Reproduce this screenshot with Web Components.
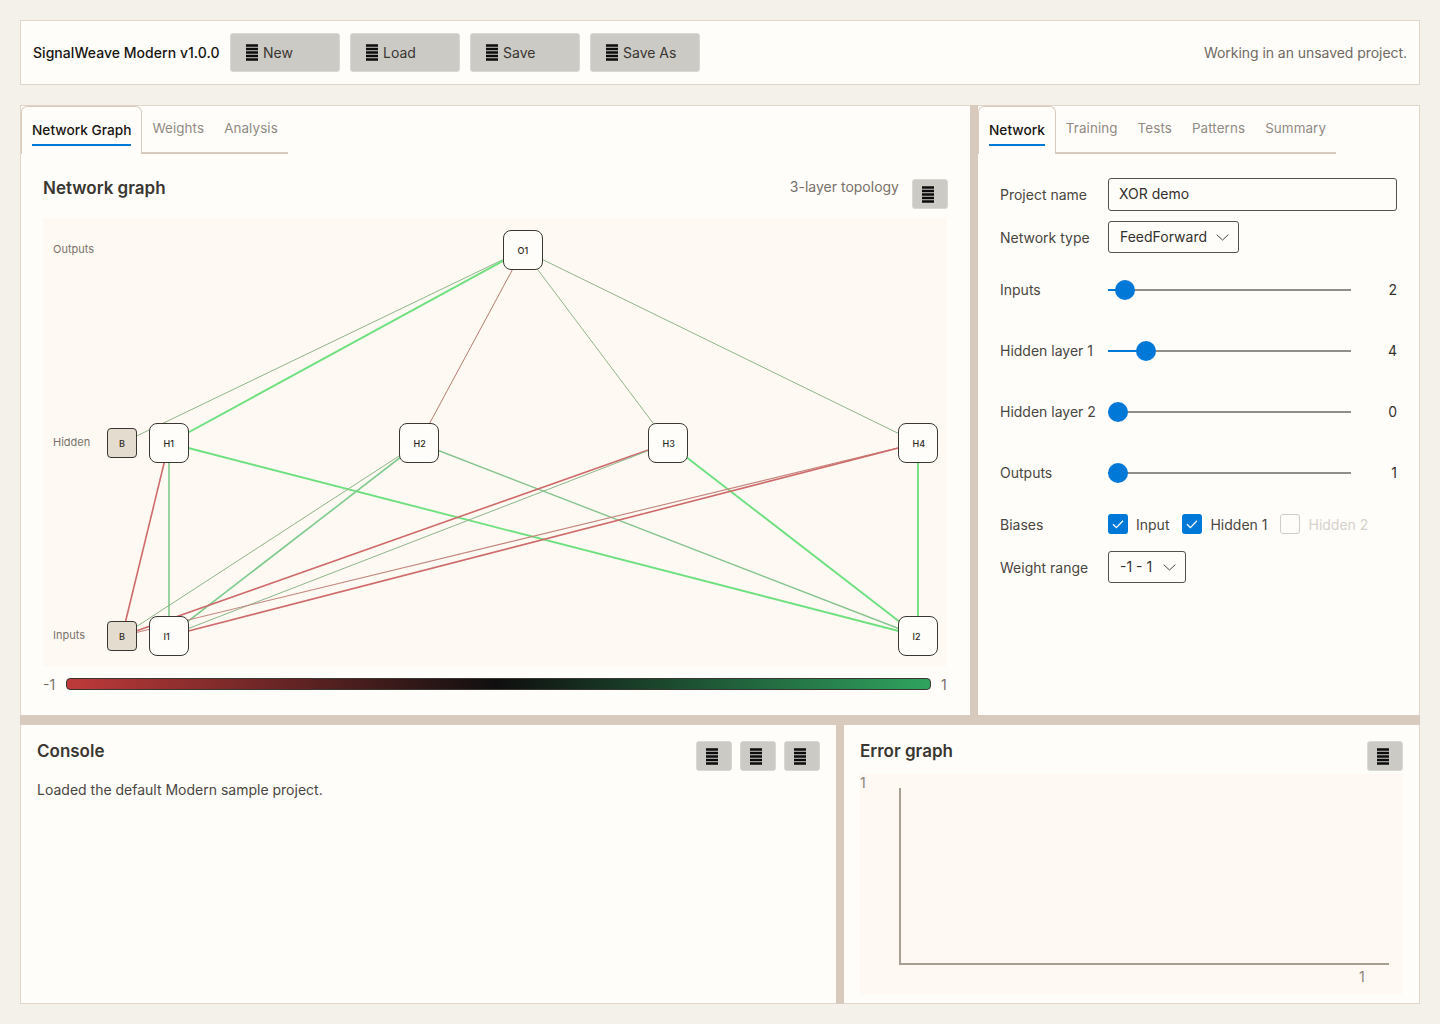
<!DOCTYPE html>
<html lang="en">
<head>
<meta charset="utf-8">
<title>SignalWeave Modern</title>
<style>
  html, body { margin: 0; height: 100%; }
  body {
    background: #f4f0ea;
    padding: 20px;
    box-sizing: border-box;
    height: 1024px;
    font-family: Inter, "Liberation Sans", sans-serif;
    font-size: 14px;
    color: #3a3631;
  }
  sw-header { margin-bottom: 20px; }
</style>
</head>
<body>
<sw-header title="SignalWeave Modern v1.0.0" status="Working in an unsaved project."></sw-header>
<sw-workspace>
  <sw-network-panel slot="graph"></sw-network-panel>
  <sw-settings-panel slot="settings"></sw-settings-panel>
  <sw-console slot="console"></sw-console>
  <sw-error-graph slot="error"></sw-error-graph>
</sw-workspace>

<script>
class Base extends HTMLElement {
  constructor() {
    super();
    this.attachShadow({ mode: 'open' });
  }

  connectedCallback() {
    this.shadowRoot.innerHTML = `<style>${this.styles()}</style>${this.markup()}`;
  }

  attr(name, fallback = '') {
    return this.getAttribute(name) ?? fallback;
  }
}

class Icon extends Base {
  styles() {
    return `:host { display: block; width: 12px; height: 17px; line-height: 0; }`;
  }
  markup() {
    // five stacked bars, same glyph on every button
    return `<svg width="12" height="17" viewBox="0 0 12 17">
      <path fill="#0c0c0c" d="M0 .2h12v2.6H0zM0 3.7h12v2.6H0zM0 7.2h12v2.6H0zM0 10.7h12v2.6H0zM0 14.2h12v2.6H0z"/>
    </svg>`;
  }
}

class Button extends Base {
  styles() {
    return `
    :host { display: block; }
    button {
      appearance: none;
      display: flex;
      align-items: center;
      gap: 5px;
      box-sizing: border-box;
      width: 110px;
      height: 39px;
      padding: 0 0 0 15px;
      background: #cbcac5;
      border: 1px solid #dad8d2;
      border-radius: 3px;
      font: inherit;
      color: #3a3631;
    }
    :host([icon-only]) button {
      width: 36px;
      height: 30px;
      padding: 0 0 0 9px;
    }`;
  }
  markup() {
    return `<button><sw-icon></sw-icon>${this.attr('label')}</button>`;
  }
}

class Header extends Base {
  styles() {
    return `
    :host {
      display: flex;
      align-items: center;
      box-sizing: border-box;
      height: 65px;
      padding: 0 12px;
      background: #fffdf9;
      border: 1px solid #dfd5c9;
    }
    h1 { width: 197px; margin: 0; font-size: 14px; font-weight: 500; letter-spacing: .04px; color: #171512; white-space: nowrap; }
    .actions { display: flex; gap: 10px; }
    .status { margin-left: auto; letter-spacing: -.05px; color: #6f6a63; }`;
  }
  markup() {
    const actions = ['New', 'Load', 'Save', 'Save As']
      .map(label => `<sw-button label="${label}"></sw-button>`).join('');
    return `<h1>${this.attr('title')}</h1>
      <div class="actions">${actions}</div>
      <div class="status">${this.attr('status')}</div>`;
  }
}

class Workspace extends Base {
  styles() {
    return `
    :host {
      display: grid;
      grid-template-columns: 816px 8px 126px 8px 442px;
      grid-template-rows: 610px 10px 279px;
      background: #d8cbbd;
    }
    .graph { grid-column: 1 / 4; grid-row: 1; display: grid; }
    .settings { grid-column: 5; grid-row: 1; display: grid; }
    .console { grid-column: 1; grid-row: 3; display: grid; }
    .error { grid-column: 3 / 6; grid-row: 3; display: grid; }`;
  }
  markup() {
    return `
      <div class="graph"><slot name="graph"></slot></div>
      <div class="settings"><slot name="settings"></slot></div>
      <div class="console"><slot name="console"></slot></div>
      <div class="error"><slot name="error"></slot></div>`;
  }
}

class Tabs extends Base {
  styles() {
    return `
    :host { display: flex; align-items: flex-start; height: 48px; font-size: 13.7px; white-space: nowrap; }
    .tab { padding: 0 10px; margin-top: 14px; color: #8f8a83; font-size: 13.4px; letter-spacing: .1px; line-height: 16px; }
    .rest { display: flex; height: 48px; box-sizing: border-box; border-bottom: 2px solid #d8cbbd; }
    .active {
      box-sizing: border-box;
      height: 48px;
      padding: 15px 10px 0;
      background: #fffdf9;
      border: 1px solid #d8cbbd;
      border-bottom: 0;
      border-radius: 6px 6px 0 0;
      color: #171512;
      font-weight: 500;
    }
    .active span { display: block; line-height: 17px; padding-bottom: 5px; border-bottom: 2px solid #0078d7; }`;
  }
  markup() {
    const [first, ...rest] = this.attr('items').split(',');
    return `<div class="active"><span>${first}</span></div>
      <div class="rest">${rest.map(t => `<div class="tab">${t}</div>`).join('')}</div>`;
  }
}

class Graph extends Base {
  styles() {
    return `
    :host { display: block; position: relative; width: 904px; height: 448px; background: #fff9f3; }
    svg { position: absolute; inset: 0; }
    .node, .bias {
      position: absolute;
      box-sizing: border-box;
      display: flex;
      align-items: center;
      border: 1px solid #3a3631;
      font-size: 9px;
      font-weight: 500;
      color: #2d2a26;
    }
    .node { width: 40px; height: 40px; margin: -20px; padding-left: 13.5px; border-radius: 8px; background: #fffdf9; }
    .bias { width: 30px; height: 30px; margin: -15px; justify-content: center; border-radius: 4px; background: #e3dccf; }
    .row { position: absolute; left: 10px; font-size: 11px; color: #7a736b; line-height: 14px; }`;
  }
  markup() {
    const pos = {
      O1: [480, 32], H1: [126, 225], H2: [376, 225], H3: [625, 225], H4: [875, 225],
      I1: [126, 418], I2: [875, 418], BH: [79, 225], BI: [79, 418]
    };
    const strong = ['#6fe07f', 1.9], mid = ['#7fcb8e', 1.6], soft = ['#86c48f', 1.4], red = ['#cf6b6b', 1.6];
    const faint = ['#8db58a', 1], brown = ['#b47c6e', 1], thinRed = ['#c3857d', 1.1];
    const edges = [
      ['BH', 'O1', faint], ['H1', 'O1', strong], ['H2', 'O1', brown],
      ['H3', 'O1', faint], ['H4', 'O1', faint],
      ['BI', 'H1', red], ['I1', 'H1', mid], ['I2', 'H1', strong],
      ['BI', 'H2', faint], ['I1', 'H2', mid], ['I2', 'H2', soft],
      ['BI', 'H3', red], ['I1', 'H3', faint], ['I2', 'H3', strong],
      ['BI', 'H4', thinRed], ['I1', 'H4', red], ['I2', 'H4', strong]
    ];
    const lines = edges.map(([a, b, [color, width]]) =>
      `<line x1="${pos[a][0]}" y1="${pos[a][1]}" x2="${pos[b][0]}" y2="${pos[b][1]}" stroke="${color}" stroke-width="${width}"/>`
    ).join('');
    const nodes = ['O1', 'H1', 'H2', 'H3', 'H4', 'I1', 'I2'].map(id =>
      `<div class="node" style="left:${pos[id][0]}px;top:${pos[id][1]}px">${id}</div>`).join('');
    const bias = ['BH', 'BI'].map(id =>
      `<div class="bias" style="left:${pos[id][0]}px;top:${pos[id][1]}px">B</div>`).join('');
    return `<svg width="904" height="448">${lines}</svg>${nodes}${bias}
      <div class="row" style="top:24px">Outputs</div>
      <div class="row" style="top:217px">Hidden</div>
      <div class="row" style="top:410px">Inputs</div>`;
  }
}

class ColorBar extends Base {
  styles() {
    return `
    :host { display: flex; align-items: center; gap: 10px; height: 14px; color: #7a736b; font-size: 14px; }
    .bar {
      flex: 1;
      height: 12px;
      box-sizing: border-box;
      border: 1px solid #3a3631;
      border-radius: 4px;
      background: linear-gradient(90deg, #c03a3a, #0f0f0f 50%, #2fa45f);
    }
    span { width: 13px; }
    span:last-child { width: 6px; }`;
  }
  markup() {
    return `<span>-1</span><div class="bar"></div><span>1</span>`;
  }
}

class NetworkPanel extends Base {
  styles() {
    return `
    :host { display: block; box-sizing: border-box; background: #fffdf9; border: 1px solid #dfd5c9; border-right: 0; border-bottom: 0; }
    sw-tabs { width: 266px; }
    .head {
      display: flex;
      align-items: center;
      gap: 13px;
      height: 30px;
      margin: 25px 22px 9px;
    }
    h2 { margin: 0 auto 12px 0; font-size: 17px; font-weight: 600; color: #3a3631; }
    .note { color: #77716a; margin-bottom: 16px; }
    sw-graph { margin-left: 22px; }
    sw-color-bar { margin: 11px 23px 0 22px; }`;
  }
  markup() {
    return `<sw-tabs items="Network Graph,Weights,Analysis"></sw-tabs>
      <div class="head"><h2>Network graph</h2><span class="note">3-layer topology</span><sw-button icon-only></sw-button></div>
      <sw-graph></sw-graph>
      <sw-color-bar></sw-color-bar>`;
  }
}

class Select extends Base {
  styles() {
    return `
    :host {
      display: inline-flex;
      align-items: center;
      justify-content: space-between;
      box-sizing: border-box;
      height: 32px;
      padding: 0 9px 2px 11px;
      border: 1px solid #55514b;
      border-radius: 3px;
      color: #33302c;
    }
    svg { display: block; margin-top: 2px; }`;
  }
  markup() {
    this.style.width = this.attr('width') + 'px';
    return `${this.attr('value')}<svg width="13" height="7" viewBox="0 0 13 7"><path d="M.7.7 6.5 6 12.3.7" fill="none" stroke="#4a4641" stroke-width="1"/></svg>`;
  }
}

class Slider extends Base {
  styles() {
    return `
    :host { display: flex; align-items: center; height: 20px; }
    .track { position: relative; width: 243px; height: 2px; background: #918e89; }
    .fill { height: 2px; background: #0078d7; }
    .thumb { position: absolute; top: -9px; width: 20px; height: 20px; margin-left: -10px; border-radius: 50%; background: #0078d7; }
    .value { margin-left: auto; padding-bottom: 2px; color: #33302c; }`;
  }
  markup() {
    const at = this.attr('at');
    return `<div class="track"><div class="fill" style="width:${at}px"></div><div class="thumb" style="left:${at}px"></div></div>
      <div class="value">${this.attr('value')}</div>`;
  }
}

class Check extends Base {
  styles() {
    return `
    :host { display: inline-flex; align-items: center; gap: 8px; color: #4a4641; }
    .box { box-sizing: border-box; width: 20px; height: 20px; border-radius: 3px; background: #0078d7; }
    :host([disabled]) { color: #d5d2cc; }
    :host([disabled]) .box { background: none; border: 1px solid #cfcdc8; }
    svg { display: block; }`;
  }
  markup() {
    const tick = this.hasAttribute('disabled') ? '' :
      `<svg width="20" height="20" viewBox="0 0 20 20"><path d="M5 10.2 8.4 13.6 15 6.8" fill="none" stroke="#fff" stroke-width="1.3"/></svg>`;
    return `<div class="box">${tick}</div><span>${this.attr('label')}</span>`;
  }
}

class Field extends Base {
  styles() {
    return `
    :host { display: grid; grid-template-columns: 108px 1fr; align-items: center; }
    label { color: #4a4641; }
    :host([raised]) label { padding-bottom: 2px; }`;
  }
  markup() {
    return `<label>${this.attr('label')}</label><div class="control"><slot></slot></div>`;
  }
}

class SettingsPanel extends Base {
  styles() {
    return `
    :host { display: block; box-sizing: border-box; background: #fffdf9; border: 1px solid #dfd5c9; border-left: 0; border-bottom: 0; }
    sw-tabs { width: 358px; }
    .form { display: flex; flex-direction: column; padding: 24px 22px 0; }
    .name {
      box-sizing: border-box;
      height: 33px;
      padding: 0 10px;
      line-height: 29px;
      border: 1px solid #55514b;
      border-radius: 3px;
      color: #33302c;
    }
    .type { margin-top: 10px; }
    .sl { margin-top: 41px; }
    .first { margin-top: 27px; }
    .checks { display: flex; gap: 12px; }
    .checks sw-check:first-child { margin-right: 1px; }
    .checks sw-check:nth-child(2) { margin-right: 1px; }
    .biases { margin-top: 31px; }
    .range { margin-top: 17px; }`;
  }
  markup() {
    return `<sw-tabs items="Network,Training,Tests,Patterns,Summary"></sw-tabs>
    <div class="form">
      <sw-field label="Project name"><div class="name">XOR demo</div></sw-field>
      <sw-field class="type" label="Network type"><sw-select value="FeedForward" width="131"></sw-select></sw-field>
      <sw-field class="first" raised label="Inputs"><sw-slider at="17" value="2"></sw-slider></sw-field>
      <sw-field class="sl" raised label="Hidden layer 1"><sw-slider at="38" value="4"></sw-slider></sw-field>
      <sw-field class="sl" raised label="Hidden layer 2"><sw-slider at="10" value="0"></sw-slider></sw-field>
      <sw-field class="sl" raised label="Outputs"><sw-slider at="10" value="1"></sw-slider></sw-field>
      <sw-field class="biases" label="Biases">
        <div class="checks">
          <sw-check label="Input"></sw-check>
          <sw-check label="Hidden 1"></sw-check>
          <sw-check label="Hidden 2" disabled></sw-check>
        </div>
      </sw-field>
      <sw-field class="range" label="Weight range"><sw-select value="-1 - 1" width="78"></sw-select></sw-field>
    </div>`;
  }
}

class Console extends Base {
  styles() {
    return `
    :host { display: block; box-sizing: border-box; padding: 16px; background: #fffdf9; border: 1px solid #dfd5c9; border-top: 0; border-right: 0; }
    .head { display: flex; align-items: center; gap: 8px; height: 30px; }
    h2 { margin: 0 auto 10px 0; font-size: 17px; font-weight: 600; }
    p { margin: 10px 0 0; color: #4a4641; }`;
  }
  markup() {
    return `<div class="head"><h2>Console</h2><sw-button icon-only></sw-button><sw-button icon-only></sw-button><sw-button icon-only></sw-button></div>
      <p>Loaded the default Modern sample project.</p>`;
  }
}

class ErrorGraph extends Base {
  styles() {
    return `
    :host { display: block; box-sizing: border-box; padding: 16px 16px 0; background: #fffdf9; border: 1px solid #dfd5c9; border-top: 0; border-left: 0; }
    .head { display: flex; align-items: center; height: 30px; margin-bottom: 3px; }
    h2 { margin: 0 auto 10px 0; font-size: 17px; font-weight: 600; }
    .plot { position: relative; height: 220px; background: #fff8f3; color: #8b847b; }
    .plot span { position: absolute; line-height: 17px; }
    .y { position: absolute; left: 39px; top: 14px; width: 2px; height: 176px; background: #a89e91; }
    .x { position: absolute; left: 39px; top: 189px; width: 490px; height: 2px; background: #a89e91; }`;
  }
  markup() {
    return `<div class="head"><h2>Error graph</h2><sw-button icon-only></sw-button></div>
      <div class="plot">
        <span style="left:0;top:0">1</span>
        <div class="y"></div><div class="x"></div>
        <span style="left:499px;top:194px">1</span>
      </div>`;
  }
}

customElements.define('sw-icon', Icon);
customElements.define('sw-button', Button);
customElements.define('sw-header', Header);
customElements.define('sw-workspace', Workspace);
customElements.define('sw-tabs', Tabs);
customElements.define('sw-graph', Graph);
customElements.define('sw-color-bar', ColorBar);
customElements.define('sw-network-panel', NetworkPanel);
customElements.define('sw-select', Select);
customElements.define('sw-slider', Slider);
customElements.define('sw-check', Check);
customElements.define('sw-field', Field);
customElements.define('sw-settings-panel', SettingsPanel);
customElements.define('sw-console', Console);
customElements.define('sw-error-graph', ErrorGraph);
</script>
</body>
</html>
